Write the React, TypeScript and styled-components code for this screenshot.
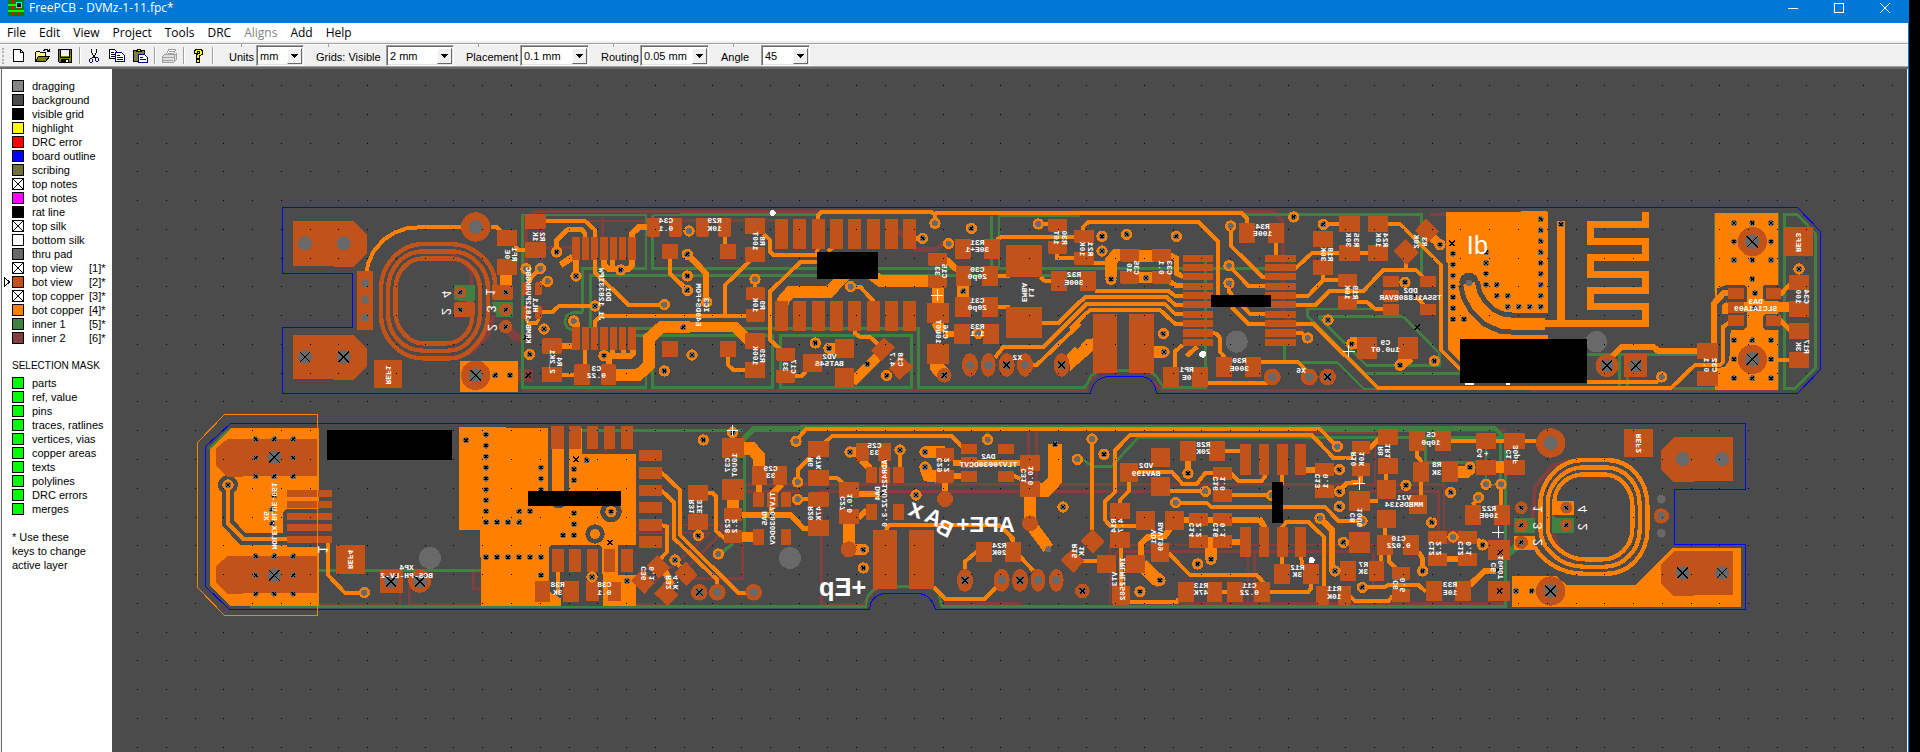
import React from 'react';
import styled, { createGlobalStyle } from 'styled-components';

const colors = {
  title: '#0078d7',
  canvas: '#4b4b4b',
  pad: '#c1521a',
  copper: '#ff8000',
  inner1: '#408040',
  inner2: '#804040',
  outline: '#0000ff',
  hole: '#696969',
  silk: '#ffffff',
  face: '#f0f0f0',
};

const GlobalStyle = createGlobalStyle`
  * { box-sizing: border-box; }
  html, body { margin: 0; background: #000; }
`;

const Window = styled.div`
  display: flex;
  flex-direction: column;
  min-height: 100vh;
  margin-right: 11px;
  border-right: 1px solid ${colors.title};
  background: ${colors.face};
  color: #000;
  font-family: 'Liberation Sans', Arial, sans-serif;
  font-size: 11px;
`;

const TitleBar = styled.header`
  display: flex;
  height: 23px;
  padding: 0 17px 7px 8px;
  align-items: center;
  gap: 5px;
  background: ${colors.title};
  color: #fff;
  font-family: 'Open Sans', 'Noto Sans', sans-serif;
  font-size: 12px;
`;

const Title = styled.h1`
  flex: 1;
  margin: 0;
  font-size: 12px;
  font-weight: 400;
  line-height: 16px;
`;

const CaptionButtons = styled.div`
  display: flex;
  gap: 34px;
`;

const CaptionButton = styled.button`
  display: flex;
  width: 12px;
  height: 14px;
  padding: 0;
  border: 0;
  align-items: center;
  justify-content: center;
  background: none;
  color: #fff;
`;

const MenuBar = styled.nav`
  display: flex;
  height: 20px;
  padding: 2px 7px 0;
  gap: 13px;
  align-items: center;
  background: #fff;
  border-bottom: 2px solid ${colors.face};
`;

const MenuItem = styled.button`
  padding: 0;
  border: 0;
  background: none;
  color: #000;
  font-family: 'Open Sans', 'Noto Sans', sans-serif;
  font-size: 12px;
  line-height: 16px;
  &:disabled { color: #838383; }
`;

const ToolBar = styled.div`
  display: flex;
  height: 25px;
  padding-left: 2px;
  align-items: center;
  border-top: 1px solid #a0a0a0;
  border-bottom: 1px solid #696969;
  box-shadow: inset 0 1px #fff, inset 0 -1px #a0a0a0;
`;

const Grip = styled.span`
  width: 4px;
  height: 16px;
  border-left: 2px dotted #b4b4b4;
`;

const ToolGroup = styled.div`
  display: flex;
  align-items: center;
  padding: 0 6px 0 5px;
  gap: 7px;
`;

const Separator = styled.span`
  width: 2px;
  height: 17px;
  border-left: 1px solid #a0a0a0;
  border-right: 1px solid #fff;
`;

const ToolButton = styled.button`
  display: flex;
  width: 16px;
  height: 16px;
  padding: 0;
  border: 0;
  background: none;
`;

const Fields = styled.div`
  display: flex;
  align-items: center;
  gap: 12px;
  margin-left: 15px;
`;

const Field = styled.label<{ $label: number; $combo: number }>`
  display: grid;
  grid-template-columns: ${p => p.$label}px ${p => p.$combo}px;
  align-items: center;
`;

const FieldName = styled.span`
  position: relative;
  padding-top: 3px;
  line-height: 13px;
  white-space: nowrap;
  &::before {
    content: '';
    position: absolute;
    left: 12px;
    top: -4px;
    width: 1px;
    height: 3px;
    background: #a0a0a0;
  }
`;

const Combo = styled.span`
  display: grid;
  height: 21px;
  grid-template-columns: 1fr 16px;
  border: 1px solid;
  border-color: #a0a0a0 #fff #fff #a0a0a0;
  box-shadow: inset 1px 1px #696969, inset -1px -1px #e3e3e3;
  background: #fff;
`;

const Select = styled.select`
  grid-area: 1 / 1 / 2 / 3;
  appearance: none;
  border: 0;
  background: none;
  padding: 0 18px 0 3px;
  color: #000;
  font-family: 'Liberation Sans', Arial, sans-serif;
  font-size: 11px;
`;

const Arrow = styled.span`
  grid-area: 1 / 2;
  display: flex;
  margin: 2px 1px 1px 0;
  align-items: center;
  justify-content: center;
  background: ${colors.face};
  border: 1px solid;
  border-color: #fff #696969 #696969 #fff;
  pointer-events: none;
`;

const Workspace = styled.div`
  display: flex;
  flex: 1;
  padding: 0 1px 0 1px;
  border-top: 1px solid #696969;
`;

const Sidebar = styled.aside`
  width: 111px;
  flex: none;
  padding: 10px 0 9px 2px;
  background: #fff;
  border-left: 1px solid #696969;
`;

const LayerList = styled.ul`
  margin: 0;
  padding: 0;
  list-style: none;
`;

const LayerRow = styled.li`
  display: grid;
  grid-template-columns: 8px 20px 57px 1fr;
  height: 14px;
  align-items: center;
  line-height: 14px;
  white-space: nowrap;
`;

const Swatch = styled.input<{ $color: string }>`
  appearance: none;
  width: 12px;
  height: 12px;
  margin: 0;
  border: 1px solid #000;
  background: ${p => p.$color};
  &:not(:checked) {
    background:
      linear-gradient(45deg, transparent 47%, #000 47%, #000 53%, transparent 53%),
      linear-gradient(-45deg, transparent 47%, #000 47%, #000 53%, transparent 53%),
      #fff;
  }
`;

const SideHeading = styled.h2`
  margin: 14px 0 3px 8px;
  font-size: 10px;
  font-weight: 400;
  line-height: 14px;
`;

const SideNote = styled.p`
  margin: 14px 8px 0;
  line-height: 14px;
`;

const Canvas = styled.main`
  flex: 1;
  min-width: 0;
  display: flex;
  overflow: hidden;
  background: ${colors.canvas};
`;

const Drawing = styled.svg`
  flex: 1;
  width: 100%;
  min-height: 640px;
`;

const SilkText = styled.text`
  fill: ${colors.silk};
  font-family: 'Liberation Mono', monospace;
  font-weight: 700;
  text-anchor: middle;
`;

const SilkMark = styled.text`
  fill: ${colors.silk};
  font-family: 'Liberation Sans', Arial, sans-serif;
  text-anchor: middle;
`;

/* ---------- board data: one drawing unit is a third of a pixel ---------- */

type Label = [number, number, number, string, string?];
type Mark = [number, number, number, string, number, number?];

interface Section {
  x: number;
  y: number;
  green?: string;
  maroon?: string;
  greenAreas?: string;
  pours?: string;
  cuts?: string;
  cutTraces?: string;
  cutRounds?: string;
  traces?: string;
  pads?: string;
  copperPads?: string;
  shapes?: string;
  rounds?: string;
  coil?: [string, string];
  vias?: string;
  xvias?: string;
  holes?: string;
  xholes?: string;
  crosses?: string;
  dots?: string;
  plus?: string;
  labels?: Label[];
  marks?: Mark[];
  masks?: string;
}

const sections: Section[] = [
  {
    x: 270, y: 195,
    maroon: `10 785,55 795,50 1260,50;10 768,62 768,250;8 815,105 815,230;8 830,78 1130,78;8 998,65 998,130;
      8 830,157 905,157;10 755,587 1260,587;26 708,396 738,428 770,428;40 744,541 790,541;
      10 520,165 570,190 605,235 606,300;12 672,360 655,420 610,468 560,488`,
    green: `8 938,352 938,220 1128,220 1128,60 757,60 757,577 1128,577 1128,422;8 1095,422 1260,422;
      8 1095,401 1260,401;8 962,400 962,241 1260,241;8 1148,60 1148,220 1260,220;8 1148,60 1260,60;
      8 1148,422 1148,577 1260,577;8 938,352 911,352 890,362 884,380 892,398 908,406`,
    greenAreas: '552,270 615,270 615,315 606,322 552,315;666,322 728,322 728,366 680,366',
    pours: '570,497 744,497 744,590 570,590',
    traces: `12 290,228 295,205 310,170 340,135 375,112 410,100 460,96 580,96;12 662,96 680,96 692,108;36 708,238 708,272;
      12 735,152 745,165 768,165;12 828,78 945,78 975,105 975,130;14 860,165 860,135 893,104 935,104 945,115 945,130;
      18 1087,128 1087,115 1108,95 1132,95;18 1002,192 1002,210 1015,222 1075,222 1087,210 1087,192;16 1028,192 1028,222;
      18 918,192 918,243;20 872,210 908,186;12 975,192 975,232 1075,329 1183,329;12 812,350 848,350 868,332 975,332;
      14 811,221 785,245 775,262;12 833,259 812,264;10 768,368 775,384 800,384 808,368;12 975,398 975,380 992,362 1260,362;
      36 1035,540 1105,540 1137,510 1137,430 1175,396 1260,396;12 945,463 945,510;18 1090,463 1090,475 1080,484 1002,484;
      16 1028,463 1028,484;16 1060,463 1060,484;18 1017,484 1017,510;16 874,453 908,453;12 874,540 914,540;
      24 919,380 919,398;12 1200,190 1200,235 1250,285`,
    pads: `261,228,48,177;312,495,84,84;681,105,60,48;681,192,60,48;666,270,62,44;552,322,62,44;765,58,62,44;765,142,62,46;
      906,126,24,69;936,126,21,69;963,126,21,69;990,126,24,69;1020,126,21,69;1047,126,21,69;1074,126,24,69;
      906,396,24,69;936,396,21,69;963,396,21,69;990,396,24,69;1020,396,21,69;1047,396,21,69;1074,396,24,69;
      756,262,20,38;795,262,20,38;756,333,20,38;795,333,20,38;816,430,60,46;816,516,60,46;912,508,48,62;993,508,45,62;
      1131,69,39,56;1197,69,39,56;1176,147,48,45;1176,438,48,48`,
    shapes: `69,78 251,78 290,118 290,178 251,215 192,215 192,212 69,212;69,420 251,420 290,460 290,517 251,554 192,554 192,551 69,551`,
    coil: ['pad', 'M676,275 C676,200 610,147 540,147 H460 C390,147 333,210 333,280 V360 C333,430 390,490 460,490 H540 C600,490 654,420 654,360 V280 C654,215 600,169 545,169 H460 C400,169 354,220 354,285 V355 C354,420 400,467 460,467 H535 C590,467 630,410 630,355 V285 C630,230 590,190 540,190 H460 C410,190 376,235 376,285 V350 C376,400 415,445 460,445 H530 C575,445 606,405 606,366'],
    rounds: '617,96,44;617,541,44;571,292,18;707,344,20;707,395,20',
    vias: '768,221;811,221;833,259;911,378;1183,329',
    xvias: '860,171;918,243;1052,225;975,333;822,402;779,478;1002,482;1183,528',
    holes: '105,145,21;221,145,21;285,265,12;285,315,12;285,367,12;617,96,21',
    xholes: `105,486,21;221,486,21;617,541,21;571,292,9;571,344,9;707,292,9;707,344,9;707,395,9;676,541,9;720,541,9;1240,397,9`,
    crosses: '769,427;775,541',
    labels: [
      [808, 125, 90, 'R2', '1K'], [723, 178, 90, 'RF1', '0E'], [357, 540, 90, 'REF1'], [1188, 88, 0, 'C34', '0.1'],
      [786, 330, 90, 'HL1', 'KRMB-1812PURKGBC'], [1006, 298, 90, 'DD1', 'J1_12833IPW'], [858, 500, 90, 'R4', '2_2K1'],
      [979, 530, 0, 'C3', '0.22'],
    ],
    marks: [[531, 298, 90, '4', 38], [531, 350, 90, '2', 38], [663, 292, 90, '1', 38], [665, 342, 90, '3', 38], [667, 398, 90, '2', 38]],
  },
  {
    x: 680, y: 195,
    maroon: '10 0,50 420,50;10 0,76 290,76;10 0,587 1200,587;12 655,105 680,140;14 700,163 770,163 790,145',
    green: `8 0,59 415,59;8 0,220 1200,220;8 0,241 1200,241;8 935,62 935,220;8 957,220 957,62 1200,62;
      8 0,401 715,401 715,577 1200,577;8 0,422 278,422 278,577 0,577;8 302,577 302,422 695,422 695,577 298,577`,
    traces: `12 413,74 413,62 425,51 755,51 765,60 765,85;12 765,54 1200,54;12 250,116 270,135 270,170 280,180 411,180 413,160;
      12 443,170 458,158;12 411,202 360,202 270,290 270,435 300,462;12 210,198 135,270 135,362;12 0,362 200,362;
      18 22,178 78,235 78,320;14 0,262 22,286;32 0,396 165,396 207,438;12 135,123 135,150;14 225,253 225,278;
      36 308,330 308,318 330,292 445,292 500,236;34 570,235 600,258 748,258;12 512,275 540,275 582,320;
      12 525,405 525,415 540,426 570,426 597,450;12 144,484 144,510 160,525 198,525;12 343,543 365,543 380,526;
      14 706,130 728,130;30 600,480 518,560;34 447,460 470,460;18 795,190 832,225;36 773,277 773,328;
      34 770,380 785,410;18 795,417 825,417;42 770,505 770,515 793,541;36 850,270 850,308;12 952,243 990,243;
      12 952,336 990,336;12 950,134 965,126 1185,126;12 1075,87 1105,87;12 1132,176 1132,190 1185,190;
      12 1080,246 1095,258 1115,258;12 1086,384 1135,384 1200,320;12 945,488 970,456 1090,456 1200,348;
      12 1060,510 1070,510 1200,386;40 1165,505 1200,468`,
    pads: `48,69,39,56;114,69,39,56;120,147,48,45;195,69,60,48;195,156,60,45;
      285,72,39,90;339,72,39,90;396,72,39,90;450,72,39,90;504,72,39,90;561,72,39,90;615,72,39,90;669,72,39,90;
      285,318,39,90;339,318,39,90;396,318,39,90;450,318,39,90;504,318,39,90;561,318,39,90;615,318,39,90;669,318,39,90;
      198,277,57,38;198,342,57,38;195,414,60,48;195,501,60,48;120,438,48,48;288,459,57,38;288,525,57,38;369,477,57,54;
      465,432,57,57;465,519,57,57;744,174,57,38;744,240,57,38;741,324,66,60;741,447,66,60;825,132,48,60;912,132,48,60;
      828,213,45,60;906,213,48,60;825,306,48,60;906,306,48,60;822,387,48,60;909,387,48,60;978,150,108,96;978,336,108,93;
      1104,72,57,38;1104,138,57,38;1182,105,60,38;1182,171,60,38;1113,228,48,60`,
    shapes: '612,427 645,458 603,499 574,466;662,482 701,516 658,555 628,520',
    rounds: '870,510,24,35;925,510,22,35;980,510,24,35;1035,510,24,35;1145,510,24,35;793,541,22',
    vias: '27,108;225,253;765,85;806,146;512,275;1075,87;80,321;895,415',
    xvias: '22,178;22,243;22,286;36,480;728,130;874,100;406,444;447,460;620,542',
    holes: '870,510,13;925,510,13;1035,510,13',
    xholes: '980,510,13;1145,510,13;793,541,11;562,507,9;850,289,9;10,397,9',
    dots: '278,54,9',
    plus: '772,300,18',
    masks: '411,171,183,81',
    labels: [
      [104, 88, 0, 'R29', '10K'], [237, 138, 90, 'R8', '100T'], [68, 330, 90, 'IC3', 'E40DS+FOM'], [237, 330, 90, 'R9', '10K'],
      [237, 482, 90, 'R29', '100K'], [329, 515, 90, 'C17', '33'], [448, 495, 0, 'VD2', 'BAT54S'], [650, 493, 90, 'C18', '4.7'],
      [784, 228, 90, 'C15', '33'], [786, 410, 90, 'C16', '10U0T'], [892, 152, 0, 'R31', '30E+1'], [892, 233, 0, 'C30', '20p0'],
      [892, 326, 0, 'C31', '20p0'], [892, 405, 0, 'R33', '1.1'], [1012, 488, 0, 'X2'], [1045, 292, 90, 'L1', 'EMBA'],
      [1142, 128, 90, 'R30', '10T'], [1182, 250, 0, 'R32', '300E'],
    ],
  },
  {
    x: 1070, y: 195,
    maroon: `12 0,50 610,50 640,80 640,360 700,410;8 0,587 50,587 55,560 80,540;8 250,560 275,587 930,587`,
    green: `8 525,59 1055,59 1055,245;8 0,220 590,220;8 0,241 40,241;8 406,180 406,577 280,577 260,545 235,527 95,527 65,540 45,577 0,577;
      8 643,440 643,495;8 570,502 802,502 882,582 1080,582;8 940,342 712,342 712,362 885,535 1080,535;
      8 745,365 1000,365 1108,475 1108,512 890,512 748,368`,
    pours: '0,485 50,432 72,430 72,465 0,528',
    traces: `12 0,54 515,54 532,72 532,86;12 40,107 40,95 55,81 385,81 444,140 444,300;12 65,204 110,204;
      36 123,245 123,198 138,180 155,180;36 205,182 248,182;34 205,247 248,247;16 301,180 320,190 320,235 340,246;
      16 301,262 320,272 340,272;12 75,288 295,288 315,302 340,302;12 0,350 45,307 290,307 315,329 340,329;
      12 0,375 50,327 285,327 315,357 340,357;12 0,402 60,345 270,345 315,386 340,386;34 250,471 282,471;
      12 315,518 315,470 337,450;14 350,483 382,455;12 482,93 482,152 578,246 590,246;12 477,212 535,272 590,272;
      12 477,265 477,290 540,357 590,357;12 485,336 535,386 590,386;12 618,142 618,182;12 676,220 725,175 896,175;
      12 676,302 715,302 760,255 806,255;12 760,238 760,258;12 676,329 738,329 778,288 880,288 940,225 1038,225 1058,245;
      12 1008,205 1008,225;12 676,386 730,386 925,580 1080,580;12 676,413 695,413 713,429;
      12 428,413 442,418 450,430 450,470 465,488;12 860,320 890,320 915,342 940,342;12 571,502 685,502 718,535;
      12 411,564 590,564 605,550;12 760,87 808,87;12 952,87 990,87 1113,210 1113,465 1178,530;36 840,445 864,445;
      34 990,511 1020,485;12 1036,302 1062,330;12 0,126 14,126;12 0,190 14,190;26 1085,125 1110,149`,
    pads: `12,105,54,38;12,171,54,38;30,228,48,60;150,162,57,38;150,228,57,38;246,162,57,38;246,228,57,38;
      339,180,90,21;339,207,90,21;339,234,90,21;339,264,90,21;339,291,90,21;339,318,90,21;339,348,90,21;339,375,90,21;339,402,90,24;339,432,90,21;
      585,180,93,21;585,207,93,21;585,234,93,21;585,264,93,21;585,291,93,21;585,318,93,21;585,348,93,21;585,375,93,21;585,402,93,24;585,432,93,21;
      69,357,72,177;177,357,75,177;279,516,48,60;366,516,48,60;438,486,48,60;525,486,48,60;507,84,48,60;594,84,48,60;
      729,108,60,48;729,195,60,45;807,63,63,48;807,150,63,48;894,63,60,48;894,150,60,48;804,237,57,38;804,303,57,38;
      861,426,60,66;984,426,60,66;939,243,48,34;939,286,48,34;939,327,48,34;1050,243,48,34;1050,327,48,34`,
    shapes: '1068,70 1106,110 1072,145 1034,107;1007,132 1048,173 1010,210 972,168',
    rounds: '607,546,25;718,546,25;773,546,25',
    vias: '482,93;477,212;477,265;713,429',
    xvias: `170,118;96,124;96,168;319,124;123,253;280,416;282,471;671,66;760,88;1005,262;774,375;845,447;990,511;1093,498;1110,149`,
    holes: '607,546,13;718,546,13;500,440,33',
    xholes: '773,546,13;228,249,9;1036,302,9',
    crosses: '1042,397',
    dots: '398,478,10',
    plus: '836,468,18',
    masks: '423,300,180,36',
    labels: [
      [50, 162, 90, 'R21', '10K'], [190, 218, 90, 'C35', '10'], [287, 218, 90, 'C33', '0.1'], [578, 105, 0, 'R34', '100E'],
      [772, 178, 90, 'R18', '30K'], [848, 135, 90, 'R35', '30K'], [936, 135, 90, 'R24', '10K'], [1052, 140, 90, 'R3', '20K'],
      [845, 292, 90, 'R19', '10K'], [1022, 296, 0, 'DD2', 'TS5A1L880BVAR'], [946, 452, 0, 'C9', '1u0.0T'], [350, 535, 0, 'RP1', '0E'],
      [508, 508, 0, 'R30', '300E'], [693, 526, 0, 'X6'], [510, 309, 0, 'DD1'],
    ],
  },
  {
    x: 1430, y: 195,
    maroon: '10 0,59 50,59;12 345,350 345,420;8 300,588 1045,588;8 130,260 152,280',
    green: `8 568,478 568,575;8 471,478 860,478;8 730,580 860,580;8 0,535 90,535;8 592,540 592,575;
      8 1064,580 1064,58 1100,58 1156,115 1156,520 1095,580 1060,580;8 856,55 856,290;8 1043,55 1043,582`,
    pours: `48,52 273,52 273,48 350,48 354,52 354,434 90,434 90,500 54,462 54,205 48,200;856,54 1043,54 1043,585 856,585`,
    cutTraces: `66 117,265 125,300 145,335 175,365 215,383 260,387 356,387`,
    cutRounds: '117,262,29',
    cuts: `862,280 890,270 945,270 952,278 952,392 940,405 902,405 898,495 885,515 862,520;998,275 1005,270 1050,270 1050,318 1005,318 998,310;
      998,365 1005,358 1050,358 1050,405 1005,405 998,397`,
    traces: `36 117,265 125,300 145,335 175,365 215,383 260,387 346,387;24 393,78 393,386;
      21 646,51 646,88 482,88 482,139 646,139 646,188 482,188 482,237 646,237 646,287 482,287 482,335 646,335 646,386 340,386;
      18 545,485 575,456 670,456 685,468 802,468;12 471,562 680,562 695,547;12 0,580 722,580 795,510 870,510 880,500 880,395 898,383;
      18 852,446 852,325 880,295 900,295;18 885,358 885,335 895,328;30 940,336 1080,336;14 1050,300 1080,268;14 1050,375 1082,407;12 1043,495 1078,495`,
    pads: `1062,96,87,87;1077,240,60,45;1077,318,60,48;1077,384,60,48;1077,471,60,48;894,279,48,33;894,321,48,33;894,360,48,33;
      1008,279,45,33;1008,360,45,33;801,444,63,48;801,528,63,45;582,477,69,69`,
    rounds: '531,512,34;967,140,44;967,493,44',
    vias: '695,546',
    xvias: '1107,222;13,498',
    holes: '117,264,10;499,440,32',
    xholes: `531,512,20;617,512,20;967,140,22;967,493,22;393,88,9;332,73,9;332,106,9;332,139,9;332,172,9;332,204,9;332,236,9;332,269,9;
      332,302,9;332,335,9;168,172,9;168,204,9;168,236,9;168,269,9;200,269,9;200,302,9;233,302,9;233,335,9;266,335,9;299,335,9;
      69,176,9;69,209,9;69,242,9;69,275,9;69,307,9;69,340,9;69,373,9;102,373,9;912,84,9;967,84,9;1023,84,9;912,140,9;1023,140,9;
      912,195,9;967,195,9;1023,195,9;967,252,9;975,295,9;975,338,9;912,436,9;967,436,9;1023,436,9;912,493,9;1023,493,9;
      912,550,9;967,550,9;1023,550,9`,
    crosses: '66,145',
    masks: '90,432,381,132',
    labels: [
      [977, 330, 0, 'DA3', 'SLC1A1A09'], [1118, 305, 90, 'C34', '100'], [1118, 455, 90, 'R17', '3K'], [842, 510, 90, 'C32', '0.1'],
      [1107, 142, 90, 'REF3'],
    ],
    marks: [[142, 150, 0, 'dI', 76]],
  },
  {
    x: 190, y: 405,
    maroon: '8 387,597 630,597 630,560;8 658,545 658,599 873,599;8 850,500 850,550 873,550;8 1112,550 1240,550;8 1248,130 1248,148;8 1215,470 1240,445',
    green: `8 58,132 122,70;8 365,310 365,425;8 387,496 873,496;8 180,604 1260,604;8 160,385 160,425;8 180,385 180,425;8 1075,76 1260,76;
      60 1075,300 1135,300`,
    pours: `62,130 125,70 387,70 387,603 122,603 60,540 60,135;
      807,66 948,66 948,69 1177,69 1177,148 1337,148 1337,420 1283,420 1283,510 1337,510 1337,603 873,603 873,456 870,456 870,375 807,375`,
    cutTraces: '36 114,240 114,355 160,402 292,402;12 1080,69 1080,270 1090,300;14 1129,69 1129,270 1120,300',
    cutRounds: '114,240,30;1215,387,29;1263,320,32;1105,282,28',
    cuts: `290,312 387,312 387,425 290,425 290,386 278,386 278,322;
      1084,421 1230,421 1236,427 1236,505 1240,510 1240,603 1112,603 1112,580 1078,560 1078,427`,
    traces: `12 114,240 114,355 160,402 292,402;12 414,412 414,510 465,564 523,564;12 1104,500 1104,565;36 1105,130 1105,290`,
    pads: `291,255,135,21;291,288,135,21;291,324,135,21;291,357,135,21;291,393,135,21;438,420,87,87;570,496,69,68;
      1083,63,39,69;1137,63,36,69;1191,63,33,69;1086,432,36,69;1137,432,36,69;1191,432,33,69;1035,528,45,63;1119,528,48,63;1188,528,39,60`,
    shapes: `79,130 112,102 384,102 384,212 160,212 160,215 112,215 79,182;79,482 112,454 384,454 384,564 160,564 160,567 112,567 79,535`,
    rounds: '689,529,34',
    vias: '523,563',
    xvias: '114,240;1206,516',
    holes: '720,459,33',
    xholes: `253,157,21;253,511,21;603,529,21;690,529,21;828,106,9;888,89,9;888,122,9;888,155,9;888,188,9;888,221,9;888,254,9;888,286,9;
      888,319,9;888,352,9;921,352,9;954,352,9;988,352,9;988,319,9;1020,319,9;1053,188,9;1053,221,9;1053,254,9;1152,193,9;1152,226,9;
      1152,325,9;1152,358,9;1152,391,9;1119,391,9;1190,166,9;888,457,9;921,457,9;954,457,9;987,457,9;1020,457,9;1053,457,9;1053,511,9;
      197,103,9;253,103,9;310,103,9;197,158,9;310,158,9;197,214,9;253,214,9;310,214,9;253,271,9;247,313,9;247,355,9;
      197,454,9;253,454,9;310,454,9;197,511,9;310,511,9;197,566,9;253,566,9;310,566,9`,
    crosses: '1158,163',
    masks: '411,75,375,90;1014,258,279,45',
    labels: [
      [242, 333, 90, 'MOLEX-BLUE-051', 'X5'], [482, 463, 90, 'REF4'], [650, 499, 0, 'XP4', 'BCS-PH-LV-2'], [1103, 550, 0, 'R38', '3K'],
      [1243, 550, 0, 'C38', '0.1'],
    ],
    marks: [[400, 434, 90, '1', 44]],
  },
  {
    x: 600, y: 405,
    maroon: `8 107,384 330,384 130,560;8 107,360 365,360 365,385 180,565;8 435,238 1260,238;8 1260,260 665,260 665,597 790,597 825,552;
      8 107,597 210,597;8 428,415 428,520 280,520;8 1030,595 1260,595;8 18,130 18,148;8 435,260 600,260`,
    green: `8 0,76 430,76;18 430,102 460,72 620,72;12 600,66 1260,66;10 434,100 434,405;10 400,415 360,447;
      8 0,604 797,604 802,575 820,555 845,545 990,545 1015,560 1025,604 1260,604;8 1163,80 1163,100`,
    traces: `12 588,108 618,72 1260,72;12 675,112 697,93 1055,93 1085,125;38 430,130 455,130 477,155 477,186;18 478,238 478,264;
      20 545,238 518,266;36 398,283 398,312;30 423,396 462,396;16 424,330 572,330 610,370 626,370;14 515,305 515,330;
      12 593,230 593,195 632,156;12 593,283 626,283;12 685,218 710,218 730,235;18 775,266 845,266;18 775,340 800,315;
      36 746,355 746,432;32 746,434 790,434;20 785,165 810,190;12 900,135 900,188;16 852,166 852,188;30 750,141 770,141;
      36 975,141 1035,141;36 975,186 985,212 1010,215;18 1035,232 1035,262;18 1060,174 1260,174;18 1060,212 1085,212;
      12 1240,212 1262,222;12 323,263 338,263 348,275 348,378 374,400;12 184,202 240,255 240,390 415,564 440,564;
      12 184,256 222,292 222,400 352,525 352,540;12 184,360 202,365 202,440 175,468;12 295,373 295,392;
      12 857,377 868,359 1195,359 1240,400 1240,413;12 1095,495 1095,470 1130,440;12 1000,545 1035,581 1155,581 1190,545;20 195,500 215,540;
      12 225,465 240,485`,
    pads: `12,63,33,69;63,63,36,69;12,432,33,69;63,432,36,69;24,531,39,57;
      117,135,69,33;117,186,69,36;117,240,69,33;117,291,69,33;117,342,69,36;117,393,69,36;264,240,60,48;264,327,60,48;
      366,99,66,60;366,222,66,63;372,309,54,39;372,375,54,39;456,183,45,57;519,183,42,57;459,262,33,44;501,262,33,44;543,262,30,44;
      459,372,33,48;543,372,30,48;624,108,63,48;624,195,63,48;624,262,63,43;624,345,63,48;717,231,60,48;717,312,60,45;
      768,114,39,54;834,114,39,54;798,186,33,48;837,186,33,48;879,186,33,48;798,297,33,48;879,297,33,48;1008,129,54,38;1008,195,54,38;
      1083,117,48,30;1083,156,48,33;1083,198,48,33;1194,117,48,30;1194,198,48,33;819,375,72,177;927,375,75,177;1128,411,48,60;1215,411,48,60`,
    shapes: `172,450 210,487 176,520 141,482;128,492 163,533 133,567 94,526;258,470 293,510 260,543 224,505;198,527 234,570 203,602 163,566`,
    rounds: '298,562,25;352,562,25;461,562,25;1035,282,24;746,433,24;1095,526,24,34;1205,526,24,34;1260,526,24,34',
    vias: '588,109;593,231;593,283;355,447;1163,104',
    xvias: '33,320;310,105;398,83;295,392;225,465;750,141;900,135;975,141;975,186;948,270;790,434;790,489',
    holes: '352,562,13;461,562,13;1205,526,13;570,459,33',
    xholes: '298,562,13;1095,526,13;1260,526,13;515,330,9;845,266,9;81,528,9',
    crosses: '30,413',
    plus: '398,77,16',
    labels: [
      [392, 180, -90, 'C37', '10U0T'], [286, 305, -90, 'R31', '3IE'], [392, 363, -90, 'C28', '2.2'], [512, 200, 0, 'C29', '33'],
      [505, 340, -90, 'DA5', 'TLV70030DCV'], [643, 172, -90, 'R6', '47K'], [643, 325, -90, 'R20', '47K'], [738, 295, -90, 'C27', '10.0'],
      [843, 265, -90, 'DA4', 'ADR421AUJZ-3.0'], [823, 131, 0, 'C25', '33'], [1028, 180, -90, 'C29', '2.2'],
      [1165, 166, 0, 'DA2', 'TLV70030DCVT'], [1198, 431, 0, 'R24', '20K'], [142, 505, -90, 'C36', '0.1'], [215, 532, -90, 'R32', '4.K'],
    ],
    marks: [
      [950, 310, 20, 'x', 76, 700], [1002, 335, 25, 'A', 66, 700], [1035, 368, 25, 'B', 66, 700], [1157, 356, 0, 'APE+', 66, 700],
      [728, 546, 0, '+Ep', 76, 700],
    ],
  },
  {
    x: 1010, y: 405,
    maroon: `8 55,80 55,240;8 80,80 80,240;8 0,238 790,238;8 0,260 500,260;8 300,597 300,420 1125,420;8 320,440 1030,440;
      8 714,597 714,440;8 733,597 733,440;8 820,238 1095,238 1095,82 885,82;8 400,595 1260,595;8 1090,560 1090,440;8 320,440 320,450`,
    green: `12 0,66 930,66;18 930,72 1260,72;8 220,163 245,184 305,184 385,97 1260,97;8 0,604 1260,604;8 1247,97 1247,170`,
    traces: `12 0,72 930,72 982,125;12 380,362 300,362 285,345 285,290 316,260 316,135 360,90 905,90 970,158 1030,158;
      42 135,118 135,225 108,254 85,254;36 60,273 60,355 115,430;12 246,102 246,376;12 357,230 357,258 330,285 330,296;
      12 383,202 487,202 518,237 560,237 585,205 612,205;12 664,205 685,228 755,228 768,210;12 478,258 590,258;12 664,270 785,270;
      12 497,293 590,293 603,306 945,306 985,347 1055,347;12 643,138 692,138;18 534,165 534,205;12 815,208 815,240;18 886,195 917,195;
      14 1078,132 1108,100;14 1052,210 1052,230 1010,235 988,258;18 520,345 750,345 765,368;18 664,410 692,410;36 603,395 603,462;
      18 480,372 465,392 415,395 393,415 393,452;40 395,480 435,520 450,526;12 476,445 540,510 740,510 762,534;12 333,428 333,545;
      12 213,468 263,468;12 0,390 10,412;12 30,455 70,497;12 634,561 653,561;12 778,561 895,561 903,550 903,535;12 815,454 815,480;
      12 872,454 878,480;12 815,368 830,351 895,351 941,395 941,545;18 930,340 966,375 966,490 975,498;12 358,591 500,591 505,580;
      12 1020,573 1035,588 1135,588 1148,573;12 1057,547 1120,547 1135,540 1225,540 1248,560;12 1137,448 1137,470 1157,490;
      12 1113,448 1113,470;12 1078,288 1105,288;12 1128,205 1128,227;12 1125,368 1125,392;12 1222,136 1222,155 1237,172;
      12 1233,228 1233,272;14 1225,440 1238,460 1238,498`,
    pads: `30,150,60,48;30,228,60,48;0,411,33,60;0,117,12,30;330,174,54,57;423,129,57,57;423,216,57,57;510,108,48,60;597,108,48,60;
      609,186,57,39;609,252,57,39;690,117,33,93;747,117,30,93;801,117,33,93;855,117,33,93;690,366,33,90;747,366,30,90;801,366,33,90;855,366,33,90;
      915,174,57,39;915,240,57,39;1026,108,54,39;1026,174,54,39;1017,258,63,60;1017,381,63,63;1104,72,60,48;1104,159,60,48;
      1101,225,57,57;1101,315,57,54;1197,78,48,60;1209,171,48,60;1197,270,54,57;1101,390,48,60;1179,390,48,60;990,468,48,60;1077,468,45,60;
      1146,486,54,38;1146,552,54,39;918,543,39,56;984,543,39,56;300,294,60,48;300,381,60,48;378,318,57,57;465,318,57,57;423,414,54,57;
      261,450,57,54;348,450,57,54;306,543,54,56;504,531,48,60;591,531,45,60;651,531,48,60;732,531,48,60;537,324,57,39;537,390,57,39;
      609,324,57,39;609,390,57,39;792,477,48,60;879,477,48,60`,
    shapes: '248,373 284,410 248,446 210,408;187,432 222,468 190,505 151,465',
    rounds: '60,355,24;30,526,24,34;84,526,22,34;139,526,22,34;217,558,22',
    vias: '202,163;246,102;586,259;497,293;785,271;930,340;982,125;1056,348',
    xvias: '282,148;159,306;534,205;563,477;603,463;390,560;450,526;988,194;988,260;988,305;1000,412;975,498;1057,547;1188,241;1238,498',
    holes: '115,433,9;84,526,13;139,526,13',
    xholes: '30,526,13;217,558,11;135,118,9',
    dots: '905,466,9',
    plus: '1047,236,18',
    masks: '786,231,33,123',
    labels: [
      [50, 212, -90, 'C31', '10.0'], [408, 193, 0, 'VD2', 'BAV199'], [580, 128, 0, 'R28', '20K'], [627, 236, -90, 'C16', '1.0'],
      [934, 228, -90, 'C13', '0.1'], [1042, 162, -90, 'R10', '10K'], [1122, 138, -90, 'R8', '1R1'], [1182, 288, 0, 'VJ1', 'MMBD5134'],
      [1038, 338, -90, 'C8', '10U0'], [204, 438, -90, 'R15', '1K'], [320, 362, -90, 'R14', '4.7'], [440, 395, -90, 'VD1', 'BAV199'],
      [555, 375, -90, 'C14', '2.2'], [627, 375, -90, 'C16', '0.1'], [325, 522, -90, 'VT3', 'IRLML2502'], [573, 552, 0, 'R13', '47K'],
      [718, 552, 0, 'C11', '0.22'], [862, 497, 0, 'R12', '3K'], [1060, 488, 0, 'R7', '3K'], [973, 562, 0, 'R11', '10K'],
      [1166, 540, -90, 'C6', '0.5'], [1166, 410, 0, 'C10', '0.022'],
    ],
  },
  {
    x: 1370, y: 405,
    maroon: `8 0,595 405,595;8 0,238 222,238 222,400;8 0,260 205,260 205,380;8 170,77 405,77;12 600,165 545,185 495,245 488,340;
      12 548,385 570,435 620,467;40 230,396 270,396`,
    green: `14 0,71 375,71 405,100;8 407,95 407,604 0,604;8 0,97 392,97 392,240;8 167,97 167,173 348,173;8 348,130 348,240 392,240;
      22 405,452 440,425`,
    greenAreas: '432,340 494,340 494,383 432,383;547,330 560,340 611,340 611,383 547,383',
    pours: '426,514 560,514 590,540 797,540 908,430 1112,430 1112,605 426,605',
    traces: `12 242,107 505,107;36 376,187 405,187;36 262,200 290,200 305,187;12 393,240 393,302;12 325,278 308,300;18 229,462 266,462;
      20 320,405 338,420;18 300,540 345,497 378,497`,
    copperPads: '547,288,64,42;433,392,62,42',
    pads: `318,84,60,48;402,84,63,48;318,165,60,45;402,165,63,45;195,78,48,60;216,171,48,60;285,300,48,60;372,300,48,60;
      174,378,57,39;264,378,57,39;174,444,57,39;264,444,57,39;354,405,66,60;168,528,48,60;255,528,48,60;354,528,66,60;762,72,87,84`,
    shapes: `873,136 912,96 1089,96 1089,227 972,227 972,231 912,231 873,194;873,478 912,438 1089,438 1089,570 972,570 972,573 912,573 873,535`,
    coil: ['copper', 'M553,290 C555,240 595,208 645,208 H700 C750,208 787,250 787,300 V370 C787,425 745,463 700,463 H645 C590,463 533,420 533,365 V295 C533,235 585,187 640,187 H705 C765,187 809,235 809,300 V375 C809,435 760,485 705,485 H640 C570,485 511,430 511,370 V300 C511,225 570,165 640,165 H710 C780,165 832,225 832,300 V375 C832,445 780,506 710,506 H640 C565,506 510,460 495,425'],
    rounds: '542,114,44;542,558,44;454,308,19;454,361,20;454,412,20;589,308,18;589,361,18;874,333,23',
    vias: '348,238;393,238;325,278;249,396',
    xvias: '300,187;242,262;185,352;338,420',
    holes: '542,114,21;874,333,12;874,283,13;874,385,13;938,162,21;1056,162,21',
    xholes: '542,558,21;938,504,21;1056,504,21;438,558,9;485,558,9;454,308,9;454,361,9;454,412,9;589,308,9;589,361,9;382,495,9',
    crosses: '391,442;389,558',
    plus: '384,381,18',
    labels: [
      [183, 100, 0, 'C5', '10p0'], [200, 190, 0, 'R8', '3K'], [338, 145, -90, 'C4', '+'], [425, 148, -90, 'C1', '30pF'],
      [357, 320, 0, 'R22', '100E'], [194, 430, -90, 'C12', '2.2'], [283, 430, -90, 'C12', '0.1'], [380, 487, -90, 'C5', '10u0T'],
      [240, 550, 0, 'R33', '10E'], [806, 115, -90, 'REF2'],
    ],
    marks: [[636, 312, -90, '4', 38], [636, 365, -90, '2', 38], [503, 312, -90, '1', 38], [503, 362, -90, '3', 38], [503, 412, -90, '2', 38]],
  },
];

const boardOutlines = [
  'M283,208 V274 H353 V328 H283 V394 H1091 C1092,386 1097,378 1109,377 H1142 C1152,378 1156,386 1157,394 H1798 L1821,370 V232 L1798,208 Z',
  'M206,447 V587 L230,610 H870 C871,602 875,594 887,594 H918 C928,594 934,602 936,610 H1746 V545 H1675 V490 H1746 V424 H231 Z',
];
const copperOutline = 'M198,443 L225,415 H318 V616 H225 L198,588 Z';

/* Visible grid: one black pixel every 2 mm. */
const gridPath = (() => {
  const pitch = 28.77;
  let d = '';
  for (let row = 0; row < 50; row++) {
    for (let col = 0; col < 130; col++) {
      d += `M${Math.round(137 + col * pitch)} ${Math.round(85 + row * pitch)}h1v1h-1z`;
    }
  }
  return d;
})();

const items = (s?: string) => (s ? s.split(';').map(v => v.trim()).filter(Boolean) : []);
const nums = (s: string) => s.split(',').map(Number);

const Traces = ({ data, color }: { data?: string; color: string }) => (
  <>
    {items(data).map((t, i) => {
      const cut = t.indexOf(' ');
      return <polyline key={i} points={t.slice(cut + 1)} fill="none" stroke={color} strokeWidth={t.slice(0, cut)} />;
    })}
  </>
);

const Areas = ({ data, color }: { data?: string; color: string }) => (
  <>{items(data).map((p, i) => <polygon key={i} points={p} fill={color} />)}</>
);

const Pads = ({ data, color, r = 0 }: { data?: string; color: string; r?: number }) => (
  <>
    {items(data).map((p, i) => {
      const [x, y, w, h] = nums(p);
      return <rect key={i} x={x} y={y} width={w} height={h} rx={r} fill={color} />;
    })}
  </>
);

const Rounds = ({ data, color }: { data?: string; color: string }) => (
  <>
    {items(data).map((p, i) => {
      const [x, y, rx, ry = rx] = nums(p);
      return <ellipse key={i} cx={x} cy={y} rx={rx} ry={ry} fill={color} />;
    })}
  </>
);

const Cross = ({ x, y, r }: { x: number; y: number; r: number }) => (
  <path d={`M${x - r},${y - r}L${x + r},${y + r}M${x + r},${y - r}L${x - r},${y + r}`} stroke="#000" strokeWidth={3} />
);

const Vias = ({ data, crossed }: { data?: string; crossed?: boolean }) => (
  <>
    {items(data).map((p, i) => {
      const [x, y] = nums(p);
      return (
        <g key={i}>
          <circle cx={x} cy={y} r={17} fill={colors.copper} />
          <circle cx={x} cy={y} r={9} fill={colors.hole} />
          {crossed && <Cross x={x} y={y} r={5} />}
        </g>
      );
    })}
  </>
);

const CrossedHoles = ({ data }: { data?: string }) => (
  <>
    {items(data).map((p, i) => {
      const [x, y, r] = nums(p);
      return (
        <g key={i}>
          <circle cx={x} cy={y} r={r} fill={colors.hole} />
          <Cross x={x} y={y} r={r > 10 ? Math.round(r * 0.75) : 5} />
        </g>
      );
    })}
  </>
);

const Silk = ({ s }: { s: Section }) => (
  <>
    {(s.labels ?? []).map(([x, y, rot, a, b], i) => (
      <g key={i} transform={`translate(${x} ${y}) rotate(${rot}) scale(-1 1)`}>
        <SilkText fontSize={24} y={b ? -3 : 8}>{a}</SilkText>
        {b && <SilkText fontSize={24} y={19}>{b}</SilkText>}
      </g>
    ))}
    {(s.marks ?? []).map(([x, y, rot, t, size, weight], i) => (
      <SilkMark
        key={i}
        fontSize={size}
        fontWeight={weight ?? 400}
        y={Math.round(size * 0.36)}
        transform={`translate(${x} ${y}) rotate(${rot}) scale(-1 1)`}
      >
        {t}
      </SilkMark>
    ))}
    <Rounds data={s.dots} color={colors.silk} />
    {items(s.plus).map((p, i) => {
      const [x, y, r] = nums(p);
      return <path key={i} d={`M${x - r},${y}H${x + r}M${x},${y - r}V${y + r}`} stroke={colors.silk} strokeWidth={3} />;
    })}
  </>
);

const Layer = ({ draw }: { draw: (s: Section) => React.ReactNode }) => (
  <>
    {sections.map((s, i) => (
      <g key={i} transform={`translate(${s.x} ${s.y}) scale(${1 / 3})`}>{draw(s)}</g>
    ))}
  </>
);

const Board = () => (
  <Drawing shapeRendering="crispEdges" role="img" aria-label="PCB layout, bottom view">
    <g transform="translate(-112 -69)">
      <Layer draw={s => <Traces data={s.maroon} color={colors.inner2} />} />
      <Layer draw={s => (
        <>
          <Traces data={s.green} color={colors.inner1} />
          <Areas data={s.greenAreas} color={colors.inner1} />
        </>
      )} />
      <Layer draw={s => (
        <>
          <Areas data={s.pours} color={colors.copper} />
          <Areas data={s.cuts} color={colors.canvas} />
          <Rounds data={s.cutRounds} color={colors.canvas} />
          <Traces data={s.cutTraces} color={colors.canvas} />
        </>
      )} />
      <Layer draw={s => (
        <>
          <Traces data={s.traces} color={colors.copper} />
          <Pads data={s.copperPads} color={colors.copper} />
        </>
      )} />
      <circle cx={595} cy={534} r={5} fill={colors.copper} />
      <Layer draw={s => (
        <>
          {s.coil && <path d={s.coil[1]} fill="none" strokeWidth={13} stroke={s.coil[0] === 'pad' ? colors.pad : colors.copper} />}
          <Pads data={s.pads} color={colors.pad} r={4} />
          <Areas data={s.shapes} color={colors.pad} />
          <Rounds data={s.rounds} color={colors.pad} />
        </>
      )} />
      <Layer draw={s => (
        <>
          <Vias data={s.vias} />
          <Vias data={s.xvias} crossed />
          <Rounds data={s.holes} color={colors.hole} />
          <CrossedHoles data={s.xholes} />
          {items(s.crosses).map((p, i) => {
            const [x, y] = nums(p);
            return <Cross key={i} x={x} y={y} r={8} />;
          })}
        </>
      )} />
      <g transform="translate(-0.5 -0.5)" fill="none">
        {boardOutlines.map(d => <path key={d} d={d} stroke={colors.outline} />)}
        <path d={copperOutline} stroke={colors.copper} />
      </g>
      <path d={gridPath} fill="#000" />
      <Layer draw={s => <Silk s={s} />} />
      <Layer draw={s => <Pads data={s.masks} color="#000" />} />
      <path d="M1465 383h9v2h-9zM1506 383h4v2h-4z" fill={colors.silk} />
    </g>
  </Drawing>
);

/* ---------- chrome ---------- */

const Ico = ({ children }: { children: React.ReactNode }) => (
  <svg width="16" height="16" viewBox="0 0 16 16" shapeRendering="crispEdges" aria-hidden="true">{children}</svg>
);

const AppIcon = () => (
  <Ico>
    <path d="M0 0h16v16H0z" fill="#008000" />
    <path d="M4 0h2v16H4zM10 6h2v10h-2z" fill="#f00" />
    <path d="M0 4h8v2H0zM0 10h16v2H0z" fill="#0f0" />
    <circle cx="11" cy="5" r="3" fill="#000" stroke="#0ff" strokeWidth="1" />
  </Ico>
);

const NewIcon = () => (
  <Ico>
    <path d="M2.5 1.5h7l3 3v9h-10z" fill="#fff" stroke="#000" />
    <path d="M9.500 1.500v3h3" fill="none" stroke="#000" />
  </Ico>
);

const OpenIcon = () => (
  <Ico>
    <path d="M1.500 13.500v-9l1-1h3l1 1h5v3" fill="#ff8" stroke="#000" />
    <path d="M1.500 13.500l3-5h11l-4 5z" fill="#808000" stroke="#000" />
    <path d="M9 2.500h1l1-1h2l2 2M15.500 1v3M13 3.500h2" fill="none" stroke="#000" />
  </Ico>
);

const SaveIcon = () => (
  <Ico>
    <path d="M1.500 1.500h13v13h-12l-1-1z" fill="#808000" stroke="#000" />
    <path d="M4 2h8v6H4z" fill="#f0f0f0" />
    <path d="M3 2h1v7h8V2h1v8H3zM4 11h8v4H4z" fill="#000" />
    <path d="M9 12h2v2H9z" fill="#fff" />
  </Ico>
);

const CutIcon = () => (
  <Ico>
    <path d="M5.500 1v3l2 4 2 2M10.500 1v3l-2 4-2 2" fill="none" stroke="#000" />
    <path d="M3.500 11.500l1-1h1l1 1v2l-1 1h-1l-1-1zM9.500 10.500l1-1h1l1 1v2l-1 1h-1l-1-1z" fill="none" stroke="#000080" />
  </Ico>
);

const CopyIcon = () => (
  <Ico>
    <path d="M0.500 1.500h5l2 2v7h-7z" fill="#fff" stroke="#000" />
    <path d="M2 4h3v1H2zM2 6h4v1H2zM2 8h4v1H2z" fill="#000" />
    <path d="M6.500 4.500h6l3 3v6h-9z" fill="#fff" stroke="#000080" />
    <path d="M8 7h3v1H8zM8 9h6v1H8zM8 11h6v1H8z" fill="#000080" />
  </Ico>
);

const PasteIcon = () => (
  <Ico>
    <path d="M1.500 2.500h11v11h-11z" fill="#808040" stroke="#000" />
    <path d="M4.500 3.500v-1l2-1h1l2 1v1z" fill="#ff0" stroke="#000" />
    <path d="M6.500 6.500h6l3 3v5h-9z" fill="#fff" stroke="#000080" />
    <path d="M8 9h3v1H8zM8 11h6v1H8z" fill="#000080" />
  </Ico>
);

const PrintIcon = () => (
  <Ico>
    <path d="M5.500 6.500l2-5h7l-2 5" fill="#fff" stroke="#a0a0a0" />
    <path d="M8 3h5v1H8zM7 5h5v1H7z" fill="#a0a0a0" />
    <path d="M1.500 8.500l2-2h11l1-1v6l-3 3h-11z" fill="#e0e0e0" stroke="#a0a0a0" />
    <path d="M1 9h12v1H1zM2 12h10v1H2zM13 7h1v7h-1z" fill="#a0a0a0" />
  </Ico>
);

const HelpIcon = () => (
  <Ico>
    <path d="M4.500 5v-2l2-2h4l2 2v3l-3 2v2h-3v-3l3-2v-2h-2v2z" fill="#ff0" stroke="#000" />
    <path d="M6.500 11.500h3v3h-3z" fill="#ff0" stroke="#000" />
  </Ico>
);

type LayerInfo = { name: string; color: string; off?: boolean; key?: string; active?: boolean };

const layers: LayerInfo[] = [
  { name: 'dragging', color: '#858585' },
  { name: 'background', color: '#4b4b4b' },
  { name: 'visible grid', color: '#000' },
  { name: 'highlight', color: '#ff0' },
  { name: 'DRC error', color: '#f00' },
  { name: 'board outline', color: '#00f' },
  { name: 'scribing', color: '#707038' },
  { name: 'top notes', color: '#fff', off: true },
  { name: 'bot notes', color: '#f0f' },
  { name: 'rat line', color: '#000' },
  { name: 'top silk', color: '#fff', off: true },
  { name: 'bottom silk', color: '#fff' },
  { name: 'thru pad', color: '#696969' },
  { name: 'top view', color: '#fff', off: true, key: '[1]*' },
  { name: 'bot view', color: colors.pad, key: '[2]*', active: true },
  { name: 'top copper', color: '#fff', off: true, key: '[3]*' },
  { name: 'bot copper', color: colors.copper, key: '[4]*' },
  { name: 'inner 1', color: colors.inner1, key: '[5]*' },
  { name: 'inner 2', color: colors.inner2, key: '[6]*' },
];

const masks = ['parts', 'ref, value', 'pins', 'traces, ratlines', 'vertices, vias', 'copper areas', 'texts', 'polylines', 'DRC errors', 'merges'];

const LayerItem = ({ layer }: { layer: LayerInfo }) => {
  const id = `layer-${layer.name.replace(/\W+/g, '-')}`;
  return (
    <LayerRow>
      <svg width="7" height="12" viewBox="0 0 7 12" shapeRendering="crispEdges" aria-hidden="true">
        {layer.active && <path d="M0.500 1.500v9l5-4.500z" fill="#fff" stroke="#000" />}
      </svg>
      <Swatch id={id} type="checkbox" defaultChecked={!layer.off} $color={layer.color} />
      <label htmlFor={id}>{layer.name}</label>
      {layer.key && <span>{layer.key}</span>}
    </LayerRow>
  );
};

const menu = ['File', 'Edit', 'View', 'Project', 'Tools', 'DRC', 'Aligns', 'Add', 'Help'];

const fields = [
  { name: 'Units', value: 'mm', label: 27, combo: 48 },
  { name: 'Grids: Visible', value: '2 mm', label: 70, combo: 68 },
  { name: 'Placement', value: '0.1 mm', label: 54, combo: 69 },
  { name: 'Routing', value: '0.05 mm', label: 39, combo: 69 },
  { name: 'Angle', value: '45', label: 40, combo: 49 },
];

export default function App() {
  return (
    <Window>
      <GlobalStyle />
      <TitleBar>
        <AppIcon />
        <Title>FreePCB - DVMz-1-11.fpc*</Title>
        <CaptionButtons>
          <CaptionButton aria-label="Minimize">
            <svg width="10" height="10" shapeRendering="crispEdges"><path d="M0 5.500h10" stroke="#fff" /></svg>
          </CaptionButton>
          <CaptionButton aria-label="Maximize">
            <svg width="10" height="10" shapeRendering="crispEdges"><path d="M0.500 0.500h9v9h-9z" fill="none" stroke="#fff" /></svg>
          </CaptionButton>
          <CaptionButton aria-label="Close">
            <svg width="10" height="10"><path d="M0 0L10 10M10 0L0 10" stroke="#fff" /></svg>
          </CaptionButton>
        </CaptionButtons>
      </TitleBar>
      <MenuBar>
        {menu.map(m => <MenuItem key={m} disabled={m === 'Aligns'}>{m}</MenuItem>)}
      </MenuBar>
      <ToolBar>
        <Grip />
        <ToolGroup>
          <ToolButton aria-label="New"><NewIcon /></ToolButton>
          <ToolButton aria-label="Open"><OpenIcon /></ToolButton>
          <ToolButton aria-label="Save"><SaveIcon /></ToolButton>
        </ToolGroup>
        <Separator />
        <ToolGroup>
          <ToolButton aria-label="Cut"><CutIcon /></ToolButton>
          <ToolButton aria-label="Copy"><CopyIcon /></ToolButton>
          <ToolButton aria-label="Paste"><PasteIcon /></ToolButton>
        </ToolGroup>
        <Separator />
        <ToolGroup><ToolButton aria-label="Print" disabled><PrintIcon /></ToolButton></ToolGroup>
        <Separator />
        <ToolGroup><ToolButton aria-label="Help"><HelpIcon /></ToolButton></ToolGroup>
        <Separator />
        <Fields>
          {fields.map(f => (
            <Field key={f.name} $label={f.label} $combo={f.combo}>
              <FieldName>{f.name}</FieldName>
              <Combo>
                <Select defaultValue={f.value}><option>{f.value}</option></Select>
                <Arrow>
                  <svg width="7" height="4" shapeRendering="crispEdges"><path d="M0 0h7v1H0zM1 1h5v1H1zM2 2h3v1H2zM3 3h1v1H3z" /></svg>
                </Arrow>
              </Combo>
            </Field>
          ))}
        </Fields>
      </ToolBar>
      <Workspace>
        <Sidebar>
          <LayerList>
            {layers.map(l => <LayerItem key={l.name} layer={l} />)}
          </LayerList>
          <SideHeading>SELECTION MASK</SideHeading>
          <LayerList>
            {masks.map(m => <LayerItem key={m} layer={{ name: m, color: '#0f0' }} />)}
          </LayerList>
          <SideNote>* Use these<br />keys to change<br />active layer</SideNote>
        </Sidebar>
        <Canvas><Board /></Canvas>
      </Workspace>
    </Window>
  );
}
